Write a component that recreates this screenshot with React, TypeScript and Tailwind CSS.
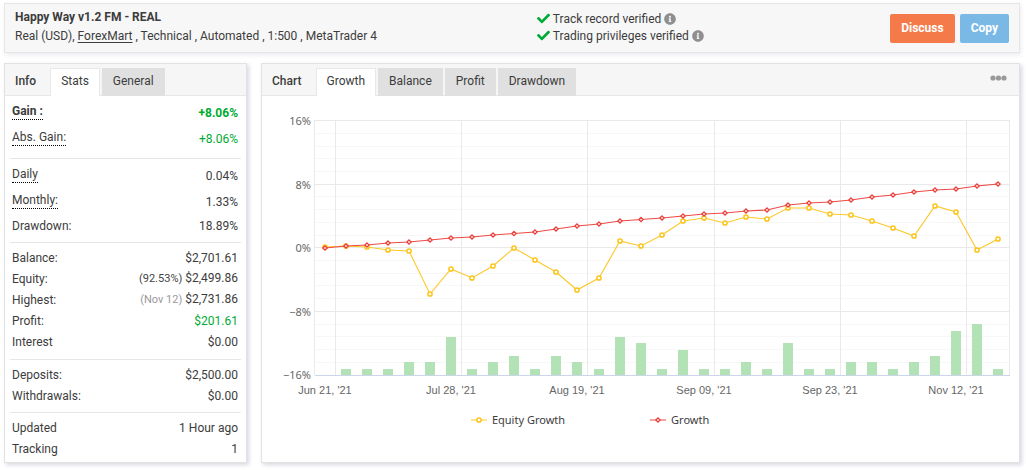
import React, { useState } from "react";
import { FaCheck, FaInfoCircle } from "react-icons/fa";

type Row = {
  label: string;
  value: string;
  note?: string;
  noteClass?: string;
  valueClass?: string;
  hint?: boolean;
  strong?: boolean;
};

type Group = { className: string; rows: Row[] };

const groups: Group[] = [
  {
    className: "pt-1 pb-1.5",
    rows: [
      { label: "Gain :", value: "+8.06%", hint: true, strong: true, valueClass: "text-[#00ab34]" },
      { label: "Abs. Gain:", value: "+8.06%", hint: true, valueClass: "text-[#00ab34]" },
    ],
  },
  {
    className: "pt-1 pb-1.5",
    rows: [
      { label: "Daily", value: "0.04%", hint: true },
      { label: "Monthly:", value: "1.33%", hint: true },
      { label: "Drawdown:", value: "18.89%" },
    ],
  },
  {
    className: "pt-1 pb-[7px]",
    rows: [
      { label: "Balance:", value: "$2,701.61" },
      { label: "Equity:", value: "$2,499.86", note: "(92.53%)", noteClass: "text-[#444]" },
      { label: "Highest:", value: "$2,731.86", note: "(Nov 12)", noteClass: "text-[#999]" },
      { label: "Profit:", value: "$201.61", valueClass: "text-[#00ab34]" },
      { label: "Interest", value: "$0.00" },
    ],
  },
  {
    className: "pt-1 pb-1.5",
    rows: [
      { label: "Deposits:", value: "$2,500.00" },
      { label: "Withdrawals:", value: "$0.00" },
    ],
  },
  {
    className: "pt-1",
    rows: [
      { label: "Updated", value: "1 Hour ago" },
      { label: "Tracking", value: "1" },
    ],
  },
];

const growth = [
  152, 150, 149, 147, 146, 144, 142, 141, 139, 137.5, 136, 133, 130, 128, 125, 123.5, 122, 120, 118, 117, 115, 114, 109,
  107, 106, 104, 101, 99, 96, 94, 93, 90, 88,
];
const equity = [
  151, 150, 151, 154, 155, 198, 173, 182, 170, 152, 164, 176, 194, 182, 145, 150, 139, 125, 122, 127, 121, 123, 112, 112,
  118, 119, 125, 132, 140, 110, 116, 154, 143,
];
const bars = [
  0, 6, 6, 6, 13, 13, 38, 6, 13, 19, 6, 19, 13, 6, 38, 32, 6, 25, 6, 6, 13, 6, 32, 6, 6, 13, 13, 6, 13, 19, 44, 51, 6,
];
const yLabels = ["16%", "8%", "0%", "−8%", "−16%"];
const xLabels = ["Jun 21, '21", "Jul 28, '21", "Aug 19, '21", "Sep 09, '21", "Sep 23, '21", "Nov 12, '21"];

const px = (i: number) => Math.round(63 + i * 21.04);
const line = (ys: number[]) => ys.map((y, i) => `${px(i)},${y}`).join(" ");

function EquityDot({ x, y }: { x: number; y: number }) {
  return <circle cx={x} cy={y} r="2.1" fill="#fff" stroke="#fcc419" strokeWidth="1.5" />;
}

function GrowthDot({ x, y }: { x: number; y: number }) {
  return (
    <path d={`M${x} ${y - 2.2}l2.2 2.2l-2.2 2.2l-2.2 -2.2z`} fill="#fdd" stroke="#eb3f3a" strokeWidth="1.2" />
  );
}

function GrowthChart() {
  return (
    <svg viewBox="0 0 757 304" className="block w-full h-auto" role="img" aria-label="Growth chart">
      <g shapeRendering="crispEdges">
        {Array.from({ length: 21 }, (_, i) => (
          <path
            key={i}
            d={`M53 ${Math.floor(24.6 + i * 12.72) + 0.5}H747`}
            stroke={i % 5 === 0 ? "#e9e9e9" : "#f7f7f7"}
          />
        ))}
        {[73.5, 199.5, 325.5, 452.5, 578.5, 704.5, 52.5, 747.5].map((x) => (
          <path key={x} d={`M${x} 24V279`} stroke="#e9e9e9" />
        ))}
        {bars.map((h, i) => (
          <rect key={i} x={px(i) - 5} y={279 - h} width="10" height={h} fill="#b4e2b7" />
        ))}
        <path d="M53 279.5H748" stroke="#ccd6eb" />
      </g>
      <polyline points={line(equity)} fill="none" stroke="#fcc829" strokeWidth="1.1" />
      {equity.map((y, i) => (
        <EquityDot key={i} x={px(i)} y={y} />
      ))}
      <polyline points={line(growth)} fill="none" stroke="#ee4a45" strokeWidth="1.1" />
      {growth.map((y, i) => (
        <GrowthDot key={i} x={px(i)} y={y} />
      ))}
      <g className="font-['Noto_Sans',sans-serif] text-[11px]" fill="#666" textAnchor="end">
        {yLabels.map((t, i) => (
          <text key={t} x="49" y={Math.round(29 + i * 63.6)}>
            {t}
          </text>
        ))}
      </g>
      <g className="font-['Liberation_Sans',Arial,sans-serif] text-[11px]" fill="#666" textAnchor="middle">
        {xLabels.map((t, i) => (
          <text key={t} x={px(i * 6)} y="298">
            {t}
          </text>
        ))}
      </g>
    </svg>
  );
}

function Tabs({ title, items, children }: { title: string; items: string[]; children?: React.ReactNode }) {
  const [active, setActive] = useState(items[0]);
  return (
    <div className="flex h-8 items-end border-b border-[#e8e8e8] bg-[#f6f6f6] pl-2.5">
      <h2 className="mr-3.5 flex h-7 items-center font-medium">{title}</h2>
      <div role="tablist" className="-mb-px flex gap-0.5">
        {items.map((t) => (
          <button
            key={t}
            type="button"
            role="tab"
            aria-selected={t === active}
            onClick={() => setActive(t)}
            className={
              t === active
                ? "h-7 border border-b-0 border-[#e8e8e8] bg-white px-2.5 pb-[3px]"
                : "h-7 bg-[#e0e0e0] px-[11px] pb-0.5"
            }
          >
            {t}
          </button>
        ))}
      </div>
      {children}
    </div>
  );
}

function Verified({ text }: { text: string }) {
  return (
    <li className="flex h-[17px] items-center">
      <FaCheck className="mr-[3px] size-[13px] text-[#00ab34]" />
      {text}
      <FaInfoCircle className="ml-[3px] size-3 text-[#8f8f8f]" />
    </li>
  );
}

const panel = "border border-[#e2e2e2] bg-white shadow-[2px_2px_4px_rgba(60,60,110,0.2)]";

export default function App() {
  return (
    <main className="flex flex-col gap-2.5 bg-white pt-[3px] pr-1.5 pb-[7px] pl-1 font-['Roboto',sans-serif] text-[12px] leading-4 text-[#3c3c3c]">
      <header className="flex h-[50px] items-center border border-[#e6e6e6] bg-[#f7f7f7] px-2.5 pb-0.5 shadow-[1px_2px_4px_rgba(60,60,110,0.1)]">
        <div className="w-[52.5%] leading-[19px]">
          <h1 className="font-bold">Happy Way v1.2 FM - REAL</h1>
          <p>
            Real (USD),{" "}
            <a href="#forexmart" className="underline underline-offset-2">
              ForexMart
            </a>{" "}
            , Technical , Automated , 1:500 , MetaTrader 4
          </p>
        </div>
        <ul>
          <Verified text="Track record verified" />
          <Verified text="Trading privileges verified" />
        </ul>
        <div className="mt-0.5 ml-auto flex gap-[5px] font-bold text-white">
          <button type="button" className="h-[29px] rounded-[2px] bg-[#f47a4a] px-[11px]">
            Discuss
          </button>
          <button type="button" className="h-[29px] rounded-[2px] bg-[#7ab9e5] px-[11px]">
            Copy
          </button>
        </div>
      </header>

      <div className="flex gap-3.5">
        <section className={`w-[243px] shrink-0 ${panel}`}>
          <Tabs title="Info" items={["Stats", "General"]} />
          <div className="mx-[5px] divide-y divide-[#e6e6e6]">
            {groups.map((g, gi) => (
              <dl key={gi} className={`pr-[3px] pl-0.5 ${g.className}`}>
                {g.rows.map((r) => (
                  <div
                    key={r.label}
                    className={`flex items-center justify-between ${r.hint ? "h-[26px]" : "h-[21px]"} ${r.strong ? "font-bold" : ""}`}
                  >
                    <dt className={r.hint ? "mb-0.5 border-b border-dotted border-black leading-[15px]" : ""}>
                      {r.label}
                    </dt>
                    <dd className={r.valueClass}>
                      {r.note && <span className={`mr-[3px] text-[11px] ${r.noteClass}`}>{r.note}</span>}
                      {r.value}
                    </dd>
                  </div>
                ))}
              </dl>
            ))}
          </div>
        </section>

        <section className={`min-w-0 flex-1 ${panel}`}>
          <Tabs title="Chart" items={["Growth", "Balance", "Profit", "Drawdown"]}>
            <button type="button" aria-label="More options" className="mr-3 mb-3.5 ml-auto">
              <svg viewBox="0 0 17 6" className="block h-1.5 w-[17px]" fill="#999">
                <circle cx="3" cy="3" r="2.6" />
                <circle cx="8.5" cy="3" r="2.6" />
                <circle cx="14" cy="3" r="2.6" />
              </svg>
            </button>
          </Tabs>
          <GrowthChart />
          <ul className="flex gap-[85px] pt-3 pb-[34px] pl-[27.6%] font-['Noto_Sans',sans-serif] text-[11px]">
            <li className="flex items-center gap-[5px]">
              <svg viewBox="0 0 16 8" className="h-2 w-4">
                <path d="M0 4H16" stroke="#fcc829" />
                <EquityDot x={8} y={4} />
              </svg>
              Equity Growth
            </li>
            <li className="flex items-center gap-[5px]">
              <svg viewBox="0 0 16 8" className="h-2 w-4">
                <path d="M0 4H16" stroke="#ee4a45" />
                <GrowthDot x={8} y={4} />
              </svg>
              Growth
            </li>
          </ul>
        </section>
      </div>
    </main>
  );
}
